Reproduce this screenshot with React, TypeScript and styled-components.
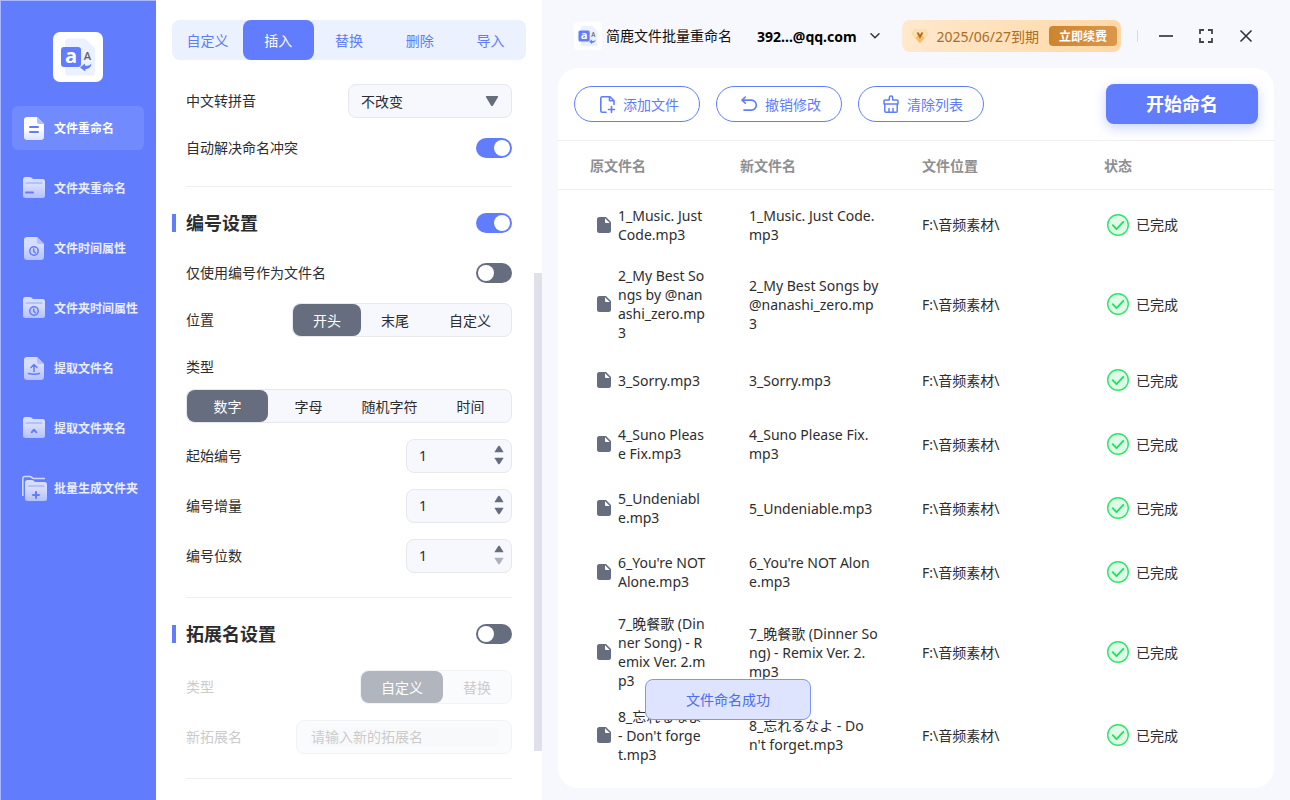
import React, { useState } from 'react';
import styled, { createGlobalStyle, css } from 'styled-components';

const color = {
  primary: '#617dfd',
  primaryText: '#5f7cf9',
  primarySoft: '#ebf1ff',
  slate: '#656d7e',
  text: '#2d2d2f',
  muted: '#8f8f91',
  line: '#efeff0',
  field: '#f6f8fd',
  fieldLine: '#e7e8ed',
  page: '#f6f8fd',
  gold: '#a86d26',
};

const GlobalStyle = createGlobalStyle`
  *, *::before, *::after { box-sizing: border-box; }
  body {
    margin: 0;
    background: ${color.page};
    color: ${color.text};
    font: 14px/19px "Noto Sans", "Noto Sans CJK SC", sans-serif;
  }
  button, input, select { font: inherit; color: inherit; }
  button { padding: 0; border: 0; background: none; cursor: pointer; }
  svg { display: block; flex: none; }
`;

const Window = styled.div`
  display: flex;
  min-height: 100vh;
`;

/* ---------- sidebar ---------- */

const Sidebar = styled.nav`
  flex: 0 0 156px;
  display: flex;
  flex-direction: column;
  align-items: center;
  gap: 24px;
  padding: 31px 12px 0 11px;
  background: ${color.primary};
  border: 1px solid #a9b8fc;
  border-width: 1px 0 0 1px;
`;

const NavList = styled.ul`
  display: flex;
  flex-direction: column;
  gap: 16px;
  align-self: stretch;
  margin: 0;
  padding: 0;
  list-style: none;
`;

const NavButton = styled.button<{ $active: boolean }>`
  display: flex;
  align-items: center;
  gap: 7px;
  width: 100%;
  height: 44px;
  padding-left: 9px;
  border-radius: 6px;
  background: ${(p) => (p.$active ? '#718afd' : 'transparent')};
  color: ${(p) => (p.$active ? '#fff' : '#e9edff')};
  font-size: 12px;
  font-weight: 700;
  white-space: nowrap;
`;

/* ---------- settings panel ---------- */

const Panel = styled.section`
  flex: 0 0 386px;
  display: flex;
  background: #fff;
`;

const PanelMain = styled.div`
  flex: 1;
  padding: 20px 8px 20px 16px;
`;

const ScrollTrack = styled.div`
  flex: 0 0 8px;
  padding: 273px 0 49px;
  display: flex;
`;

const ScrollThumb = styled.div`
  flex: 1;
  background: #dfe0e9;
`;

const Tabs = styled.div`
  display: flex;
  height: 40px;
  border-radius: 8px;
  background: ${color.primarySoft};
`;

const Tab = styled.button<{ $active: boolean }>`
  flex: 1;
  border-radius: 8px;
  background: ${(p) => (p.$active ? color.primary : 'transparent')};
  color: ${(p) => (p.$active ? '#fff' : color.primaryText)};
`;

const Group = styled.div`
  display: flex;
  flex-direction: column;
  gap: 16px;
  padding: 24px 0;
  margin: 0 14px;
  border-bottom: 1px solid ${color.line};
`;

const Fields = styled.div<{ $disabled?: boolean }>`
  display: flex;
  flex-direction: column;
  gap: 16px;
  margin-top: 8px;
  opacity: ${(p) => (p.$disabled ? 0.5 : 1)};
`;

const Field = styled.div<{ $faint?: boolean }>`
  display: flex;
  align-items: center;
  justify-content: space-between;
  min-height: 28px;
  ${(p) => p.$faint && css`color: #999;`}
  > label, > span { padding-bottom: 2px; }
`;

const Stack = styled.div`
  display: flex;
  flex-direction: column;
  gap: 8px;
`;

const TitleRow = styled.div`
  display: flex;
  align-items: center;
  justify-content: space-between;
  height: 24px;
  margin-left: -14px;
`;

const Title = styled.h2`
  display: flex;
  align-items: center;
  gap: 10px;
  margin: 0;
  font-size: 18px;
  line-height: 24px;
  font-weight: 700;
  &::before {
    content: '';
    width: 4px;
    height: 18px;
    background: ${color.primary};
  }
`;

const Switch = styled.input`
  appearance: none;
  display: flex;
  align-items: center;
  width: 36px;
  height: 20px;
  margin: 0;
  padding: 0 2px;
  border-radius: 10px;
  background: ${color.slate};
  cursor: pointer;
  &::before {
    content: '';
    width: 16px;
    height: 16px;
    border-radius: 50%;
    background: #fff;
  }
  &:checked {
    justify-content: flex-end;
    background: ${color.primary};
  }
`;

const boxed = css`
  border: 1px solid ${color.fieldLine};
  border-radius: 8px;
  background: ${color.field};
`;

const SelectBox = styled.div`
  display: grid;
  align-items: center;
  width: 164px;
  height: 34px;
  ${boxed}
  > * { grid-area: 1 / 1; }
  > svg {
    justify-self: end;
    margin-right: 12px;
    pointer-events: none;
  }
`;

const Select = styled.select`
  appearance: none;
  width: 100%;
  height: 32px;
  padding: 0 12px;
  border: 0;
  background: none;
`;

const Segments = styled.div`
  display: flex;
  height: 34px;
  ${boxed}
`;

const Segment = styled.label<{ $fill?: boolean }>`
  display: flex;
  align-items: center;
  justify-content: center;
  padding: 0 ${(p) => (p.$fill ? 0 : 20)}px;
  ${(p) => p.$fill && css`flex: 1;`}
  border-radius: 8px;
  cursor: pointer;
  &:has(input:checked) {
    background: ${color.slate};
    color: #fff;
  }
  input {
    appearance: none;
    width: 0;
    margin: 0;
  }
`;

const Stepper = styled.div`
  display: flex;
  align-items: center;
  width: 106px;
  height: 34px;
  padding: 0 6px 2px 12px;
  ${boxed}
  input {
    flex: 1;
    min-width: 0;
    padding: 0;
    border: 0;
    background: none;
    outline: 0;
  }
`;

const StepButtons = styled.div`
  display: flex;
  flex-direction: column;
  button {
    display: grid;
    place-items: center;
    width: 12px;
    height: 12px;
  }
  button:disabled { opacity: 0.5; }
`;

const TextBox = styled.div`
  display: flex;
  align-items: center;
  width: 216px;
  height: 34px;
  padding: 0 14px;
  ${boxed}
  input {
    width: 100%;
    height: 20px;
    padding: 0 0 2px;
    border: 0;
    outline: 0;
    background: #f3f4f7;
  }
  input::placeholder { color: #999; opacity: 1; }
`;

/* ---------- main area ---------- */

const Main = styled.main`
  flex: 1;
  min-width: 0;
  display: flex;
  flex-direction: column;
  padding: 0 16px 12px;
`;

const TitleBar = styled.header`
  display: flex;
  align-items: center;
  height: 68px;
  padding: 4px 8px 0 16px;
  color: #1a1a1a;
  white-space: nowrap;
`;

const AppName = styled.span`
  margin: 0 25px 0 4px;
  padding-bottom: 2px;
  color: #111;
`;

const Account = styled.button`
  display: flex;
  align-items: center;
  gap: 13px;
  color: #000;
  font-weight: 700;
`;

const Membership = styled.div`
  display: flex;
  align-items: center;
  height: 32px;
  margin-left: auto;
  padding: 0 4px 0 10px;
  border-radius: 8px;
  background: linear-gradient(90deg, #ffe8cc, #ffd8a6);
  color: ${color.gold};
  > span { margin: 0 10px 0 7px; }
`;

const Renew = styled.button`
  width: 68px;
  height: 20px;
  border-radius: 4px;
  background: linear-gradient(90deg, #cd842f, #db974b);
  color: #fff;
  font-size: 12px;
  font-weight: 700;
`;

const WindowControls = styled.div`
  display: flex;
  align-items: center;
  margin-left: 16px;
  &::before {
    content: '';
    width: 1px;
    height: 12px;
    margin-right: 8px;
    background: #d8dae0;
  }
  button {
    display: grid;
    place-items: center;
    width: 40px;
    height: 32px;
  }
`;

const Card = styled.section`
  flex: 1;
  border-radius: 20px;
  background: #fff;
`;

const Toolbar = styled.div`
  display: flex;
  align-items: center;
  gap: 16px;
  height: 73px;
  padding: 0 16px;
  border-bottom: 1px solid ${color.line};
`;

const OutlineButton = styled.button`
  display: flex;
  align-items: center;
  justify-content: center;
  gap: 8px;
  width: 126px;
  height: 36px;
  border: 1px solid ${color.primary};
  border-radius: 18px;
  color: ${color.primaryText};
  white-space: nowrap;
`;

const StartButton = styled.button`
  width: 152px;
  height: 40px;
  margin-left: auto;
  border-radius: 8px;
  background: ${color.primary};
  box-shadow: 0 4px 12px rgba(97, 125, 253, 0.35);
  color: #fff;
  font-size: 18px;
  font-weight: 700;
`;

const FileTable = styled.table`
  width: 100%;
  border-collapse: separate;
  border-spacing: 0;
  table-layout: fixed;
  th {
    width: 182px;
    height: 49px;
    padding: 0 0 0 16px;
    border-bottom: 1px solid ${color.line};
    color: ${color.muted};
    font-weight: 600;
    text-align: left;
  }
  th:first-child {
    width: 166px;
    padding-left: 32px;
  }
  th:last-child { width: auto; }
`;

const Row = styled.tr<{ $height: number }>`
  height: ${(p) => p.$height}px;
`;

const Cell = styled.td<{ $indent?: number }>`
  padding: 0 0 0 ${(p) => p.$indent ?? 16}px;
  white-space: pre;
`;

const WithIcon = styled.div`
  display: flex;
  align-items: center;
  gap: 7px;
`;

const Toast = styled.div`
  position: fixed;
  left: 50%;
  bottom: 80px;
  display: grid;
  place-items: center;
  width: 166px;
  height: 41px;
  border: 1px solid #7e95fb;
  border-radius: 8px;
  background: #dfe4fe;
  color: #4a6cf7;
`;

/* ---------- drawings ---------- */

const Logo = ({ size }: { size: number }) => (
  <svg width={size} height={size} viewBox="0 0 50 50" aria-hidden="true">
    <rect width="50" height="50" rx="7" fill="#fff" />
    <path d="M15 6.500H32L42 16.500V40a3.500 3.500 0 0 1-3.500 3.500H15.500A3.500 3.500 0 0 1 12 40V10a3.500 3.500 0 0 1 3-3.500Z" fill="#ebf1ff" />
    <rect x="8" y="15" width="20" height="20" rx="3" fill="#617dfd" />
    <text x="18" y="31" textAnchor="middle" fontFamily="Open Sans" fontSize="20" fontWeight="700" fill="#fff">a</text>
    <text x="34.500" y="27.500" textAnchor="middle" fontFamily="Open Sans" fontSize="11" fontWeight="600" fill="#5a6070">A</text>
    <path d="M38.500 31.500c-.5 3.800-3 5.600-6.200 5.700v2.300L27 35.400l5-4v2.300c2.800.3 5-.4 6.500-2.200Z" fill="#617dfd" />
  </svg>
);

type NavIconName = 'file' | 'folder' | 'fileTime' | 'folderTime' | 'extract' | 'extractFolder' | 'batch';

const FileShape = ({ fill }: { fill: string }) => (
  <>
    <path d="M6 2h10l7 7v13a3 3 0 0 1-3 3H6a3 3 0 0 1-3-3V5a3 3 0 0 1 3-3Z" fill={fill} />
    <path d="M16 2l7 7h-5a2 2 0 0 1-2-2Z" fill="#b3c0fd" />
  </>
);

const FolderShape = ({ dx = 0, dy = 0 }: { dx?: number; dy?: number }) => (
  <g transform={`translate(${dx} ${dy})`}>
    <path d="M4.500 2H9c1.500 0 2 2 4 2h8.500A2.500 2.500 0 0 1 24 6.500v14a2.500 2.500 0 0 1-2.500 2.500h-17A2.500 2.500 0 0 1 2 20.500v-16A2.500 2.500 0 0 1 4.500 2Z" fill="url(#navSoft)" />
    <path d="M4.500 9V8.500A1.500 1.500 0 0 1 6 7h14a1.500 1.500 0 0 1 1.500 1.500V9Z" fill="#b5c1fe" />
  </g>
);

const Clock = ({ y }: { y: number }) => (
  <g fill="none" stroke="#617dfd" strokeWidth="1.500" strokeLinecap="round">
    <circle cx="13" cy={y} r="4.200" />
    <path d={`M12.700 ${y - 2}v2.200l1.600 1.500`} />
  </g>
);

const NavIcon = ({ name }: { name: NavIconName }) => {
  const stroke = { fill: 'none', stroke: '#617dfd', strokeWidth: 2, strokeLinecap: 'round' as const, strokeLinejoin: 'round' as const };
  return (
    <svg width="26" height="26" viewBox="0 0 26 26" aria-hidden="true">
      <defs>
        <linearGradient id="navStrong" x1="0" y1="0" x2="0" y2="1">
          <stop offset="0.5" stopColor="#fff" />
          <stop offset="1" stopColor="#dbe1ff" />
        </linearGradient>
        <linearGradient id="navSoft" x1="0" y1="0" x2="0" y2="1">
          <stop offset="0.4" stopColor="#d6ddff" />
          <stop offset="1" stopColor="#b4c1fe" />
        </linearGradient>
      </defs>
      {name === 'file' && (
        <>
          <FileShape fill="url(#navStrong)" />
          <path d="M9 12h8M9 17h8" {...stroke} />
        </>
      )}
      {name === 'folder' && (
        <>
          <FolderShape />
          <path d="M5 17.500h7" {...stroke} />
        </>
      )}
      {name === 'fileTime' && (
        <>
          <FileShape fill="url(#navSoft)" />
          <Clock y={16} />
        </>
      )}
      {name === 'folderTime' && (
        <>
          <FolderShape />
          <Clock y={16} />
        </>
      )}
      {name === 'extract' && (
        <>
          <FileShape fill="url(#navSoft)" />
          <path d="M13 16.500V10M10 12.500l3-3 3 3M7.500 18.500q5.500 1.500 11 0" {...stroke} strokeWidth={1.5} />
        </>
      )}
      {name === 'extractFolder' && (
        <>
          <FolderShape />
          <path d="M10.700 17.300L13 14.700l2.300 2.600" {...stroke} />
        </>
      )}
      {name === 'batch' && (
        <>
          <path d="M1.800 21V3.500A2 2 0 0 1 3.800 1.500H9c1.500 0 2 2 4 2h11" fill="none" stroke="#d2daff" strokeWidth="1.500" />
          <FolderShape dx={2} dy={3} />
          <path d="M15 17v6M12 20h6" {...stroke} />
        </>
      )}
    </svg>
  );
};

const Triangle = ({ down, size }: { down?: boolean; size: 'small' | 'large' }) => (
  <svg width={size === 'large' ? 14 : 10} height={size === 'large' ? 12 : 8} viewBox="0 0 14 12" preserveAspectRatio="none" aria-hidden="true">
    <path
      d={down ? 'M1.500 1h11q1 0 .6 1L8 10.500q-1 1-2 0L.9 2Q.5 1 1.500 1Z' : 'M1.500 11h11q1 0 .6-1L8 1.500q-1-1-2 0L.9 10q-.4 1 .6 1Z'}
      fill={color.slate}
    />
  </svg>
);

const toolStroke = { fill: 'none', stroke: color.primary, strokeWidth: 1.6, strokeLinecap: 'round' as const, strokeLinejoin: 'round' as const };

const AddFileIcon = () => (
  <svg width="20" height="20" viewBox="0 0 20 20" aria-hidden="true">
    <path d="M11 18.200H7.300A1.500 1.500 0 0 1 5.800 16.700V4.300a1.500 1.500 0 0 1 1.500-1.500H15l4 4V10.500M14.500 3v3.800H19M13.500 15.500h6M16.500 12.500v6" {...toolStroke} />
  </svg>
);

const UndoIcon = () => (
  <svg width="20" height="20" viewBox="0 0 20 20" aria-hidden="true">
    <path d="M8.300 3L5 6.100l3.300 3.100M5.300 6.100h9a5 5 0 0 1 5 5v0a5 5 0 0 1-5 5H7" {...toolStroke} />
  </svg>
);

const ClearIcon = () => (
  <svg width="20" height="20" viewBox="0 0 20 20" aria-hidden="true">
    <path d="M10.300 6V3.800a1.700 1.700 0 0 1 3.400 0V6H18a1 1 0 0 1 1 1v3H5V7a1 1 0 0 1 1-1ZM5.800 10v7.200a1 1 0 0 0 1 1h10.400a1 1 0 0 0 1-1V10M10 14.500v3.500M14 14.500v3.500" {...toolStroke} strokeWidth={1.5} />
  </svg>
);

const DocIcon = () => (
  <svg width="14" height="16" viewBox="0 0 14 16" aria-hidden="true">
    <path d="M2.500 0H9l5 5v8.500a2.500 2.500 0 0 1-2.500 2.500h-9A2.500 2.500 0 0 1 0 13.500v-11A2.500 2.500 0 0 1 2.500 0Z" fill={color.slate} />
    <path d="M8 1.200V5a1 1 0 0 0 1 1h3.800Z" fill="#fff" />
  </svg>
);

const DoneIcon = () => (
  <svg width="22" height="22" viewBox="0 0 22 22" aria-hidden="true">
    <circle cx="11" cy="11" r="10.300" fill="#dffbe8" stroke="#2fe66a" strokeWidth="1.400" />
    <path d="M5.700 11.200l3.800 4 6.800-7.400" fill="none" stroke="#22e05f" strokeWidth="1.800" strokeLinecap="round" strokeLinejoin="round" />
  </svg>
);

const GemIcon = () => (
  <svg width="18" height="18" viewBox="2 0 18 18" aria-hidden="true">
    <path d="M6 2h8q1 0 1.600.8l2.200 3q.7 1-.2 2L10.800 15.500q-.8.8-1.600 0L2.400 7.800q-.9-1-.2-2l2.200-3Q5 2 6 2Z" fill="#f7bd6a" />
    <path d="M6 2h8q1 0 1.600.8l2.200 3q.7 1-.2 2L14.500 11 10 6 5.500 11 2.400 7.800q-.9-1-.2-2l2.200-3Q5 2 6 2Z" fill="#fbe0b3" />
    <path d="M7.500 5.500l2.500 4.500 2.500-4.500" fill="none" stroke="#b0691f" strokeWidth="1.800" />
  </svg>
);

/* ---------- data ---------- */

const navItems: { icon: NavIconName; label: string }[] = [
  { icon: 'file', label: '文件重命名' },
  { icon: 'folder', label: '文件夹重命名' },
  { icon: 'fileTime', label: '文件时间属性' },
  { icon: 'folderTime', label: '文件夹时间属性' },
  { icon: 'extract', label: '提取文件名' },
  { icon: 'extractFolder', label: '提取文件夹名' },
  { icon: 'batch', label: '批量生成文件夹' },
];

const tabNames = ['自定义', '插入', '替换', '删除', '导入'];

const files = [
  { from: '1_Music. Just\nCode.mp3', to: '1_Music. Just Code.\nmp3', height: 69 },
  { from: '2_My Best So\nngs by @nan\nashi_zero.mp\n3', to: '2_My Best Songs by\n@nanashi_zero.mp\n3', height: 90 },
  { from: '3_Sorry.mp3', to: '3_Sorry.mp3', height: 62 },
  { from: '4_Suno Pleas\ne Fix.mp3', to: '4_Suno Please Fix.\nmp3', height: 66 },
  { from: '5_Undeniabl\ne.mp3', to: '5_Undeniable.mp3', height: 62 },
  { from: "6_You're NOT\nAlone.mp3", to: "6_You're NOT Alon\ne.mp3", height: 66 },
  { from: '7_晚餐歌 (Din\nner Song) - R\nemix Ver. 2.m\np3', to: '7_晚餐歌 (Dinner So\nng) - Remix Ver. 2.\nmp3', height: 94 },
  { from: "8_忘れるなよ\n- Don't forge\nt.mp3", to: "8_忘れるなよ - Do\nn't forget.mp3", height: 72 },
];

/* ---------- controls ---------- */

function SegmentedControl({ name, options, fill, disabled }: { name: string; options: string[]; fill?: boolean; disabled?: boolean }) {
  return (
    <Segments role="radiogroup">
      {options.map((option, i) => (
        <Segment key={option} $fill={fill}>
          <input type="radio" name={name} defaultChecked={i === 0} disabled={disabled} />
          {option}
        </Segment>
      ))}
    </Segments>
  );
}

function NumberField({ id, label, min }: { id: string; label: string; min: number }) {
  const [value, setValue] = useState(1);
  return (
    <Field>
      <label htmlFor={id}>{label}</label>
      <Stepper>
        <input id={id} inputMode="numeric" value={value} onChange={(e) => setValue(Number(e.target.value) || min)} />
        <StepButtons>
          <button type="button" aria-label="增加" onClick={() => setValue(value + 1)}>
            <Triangle size="small" />
          </button>
          <button type="button" aria-label="减少" disabled={value <= min} onClick={() => setValue(value - 1)}>
            <Triangle size="small" down />
          </button>
        </StepButtons>
      </Stepper>
    </Field>
  );
}

export default function App() {
  const [nav, setNav] = useState(0);
  const [tab, setTab] = useState(1);

  return (
    <>
      <GlobalStyle />
      <Window>
        <Sidebar>
          <Logo size={50} />
          <NavList>
            {navItems.map((item, i) => (
              <li key={item.label}>
                <NavButton type="button" $active={i === nav} onClick={() => setNav(i)}>
                  <NavIcon name={item.icon} />
                  {item.label}
                </NavButton>
              </li>
            ))}
          </NavList>
        </Sidebar>

        <Panel>
          <PanelMain>
            <Tabs>
              {tabNames.map((name, i) => (
                <Tab key={name} type="button" $active={i === tab} onClick={() => setTab(i)}>
                  {name}
                </Tab>
              ))}
            </Tabs>

            <Group>
              <Field>
                <label htmlFor="pinyin">中文转拼音</label>
                <SelectBox>
                  <Select id="pinyin">
                    <option>不改变</option>
                  </Select>
                  <Triangle size="large" down />
                </SelectBox>
              </Field>
              <Field>
                <label htmlFor="conflict">自动解决命名冲突</label>
                <Switch id="conflict" type="checkbox" role="switch" defaultChecked />
              </Field>
            </Group>

            <Group>
              <TitleRow>
                <Title id="numbering">编号设置</Title>
                <Switch type="checkbox" role="switch" aria-labelledby="numbering" defaultChecked />
              </TitleRow>
              <Fields>
                <Field>
                  <label htmlFor="onlyNumber">仅使用编号作为文件名</label>
                  <Switch id="onlyNumber" type="checkbox" role="switch" />
                </Field>
                <Field>
                  <span>位置</span>
                  <SegmentedControl name="position" options={['开头', '末尾', '自定义']} />
                </Field>
                <Stack>
                  <Field>
                    <span>类型</span>
                  </Field>
                  <SegmentedControl name="type" options={['数字', '字母', '随机字符', '时间']} fill />
                </Stack>
                <NumberField id="start" label="起始编号" min={0} />
                <NumberField id="step" label="编号增量" min={0} />
                <NumberField id="digits" label="编号位数" min={1} />
              </Fields>
            </Group>

            <Group>
              <TitleRow>
                <Title id="extension">拓展名设置</Title>
                <Switch type="checkbox" role="switch" aria-labelledby="extension" />
              </TitleRow>
              <Fields $disabled>
                <Field $faint>
                  <span>类型</span>
                  <SegmentedControl name="extType" options={['自定义', '替换']} disabled />
                </Field>
                <Field $faint>
                  <label htmlFor="newExt">新拓展名</label>
                  <TextBox>
                    <input id="newExt" type="text" placeholder="请输入新的拓展名" disabled />
                  </TextBox>
                </Field>
              </Fields>
            </Group>
          </PanelMain>
          <ScrollTrack>
            <ScrollThumb />
          </ScrollTrack>
        </Panel>

        <Main>
          <TitleBar>
            <Logo size={28} />
            <AppName>简鹿文件批量重命名</AppName>
            <Account type="button">
              392...@qq.com
              <svg width="10" height="6" viewBox="0 0 10 6" fill="none" stroke="#333" strokeWidth="1.500" strokeLinecap="round" aria-hidden="true">
                <path d="M1 .8l4 4 4-4" />
              </svg>
            </Account>
            <Membership>
              <GemIcon />
              <span>2025/06/27到期</span>
              <Renew type="button">立即续费</Renew>
            </Membership>
            <WindowControls>
              <button type="button" aria-label="最小化">
                <svg width="14" height="14" viewBox="0 0 14 14" stroke="#555" strokeWidth="2"><path d="M0 7h14" /></svg>
              </button>
              <button type="button" aria-label="最大化">
                <svg width="14" height="14" viewBox="0 0 14 14" fill="none" stroke="#444" strokeWidth="1.800"><path d="M1 5V1h4M9 1h4v4M13 9v4H9M5 13H1V9" /></svg>
              </button>
              <button type="button" aria-label="关闭">
                <svg width="14" height="14" viewBox="0 0 14 14" stroke="#333" strokeWidth="1.600"><path d="M1.500 1.500l11 11M12.500 1.500l-11 11" /></svg>
              </button>
            </WindowControls>
          </TitleBar>

          <Card>
            <Toolbar>
              <OutlineButton type="button"><AddFileIcon />添加文件</OutlineButton>
              <OutlineButton type="button"><UndoIcon />撤销修改</OutlineButton>
              <OutlineButton type="button"><ClearIcon />清除列表</OutlineButton>
              <StartButton type="button">开始命名</StartButton>
            </Toolbar>
            <FileTable>
              <thead>
                <tr>
                  <th>原文件名</th>
                  <th>新文件名</th>
                  <th>文件位置</th>
                  <th>状态</th>
                </tr>
              </thead>
              <tbody>
                {files.map((file) => (
                  <Row key={file.from} $height={file.height}>
                    <Cell $indent={39}>
                      <WithIcon>
                        <DocIcon />
                        <span>{file.from}</span>
                      </WithIcon>
                    </Cell>
                    <Cell $indent={25}>{file.to}</Cell>
                    <Cell>{'F:\\音频素材\\'}</Cell>
                    <Cell $indent={19}>
                      <WithIcon>
                        <DoneIcon />
                        已完成
                      </WithIcon>
                    </Cell>
                  </Row>
                ))}
              </tbody>
            </FileTable>
          </Card>
        </Main>
      </Window>
      <Toast role="status">文件命名成功</Toast>
    </>
  );
}
